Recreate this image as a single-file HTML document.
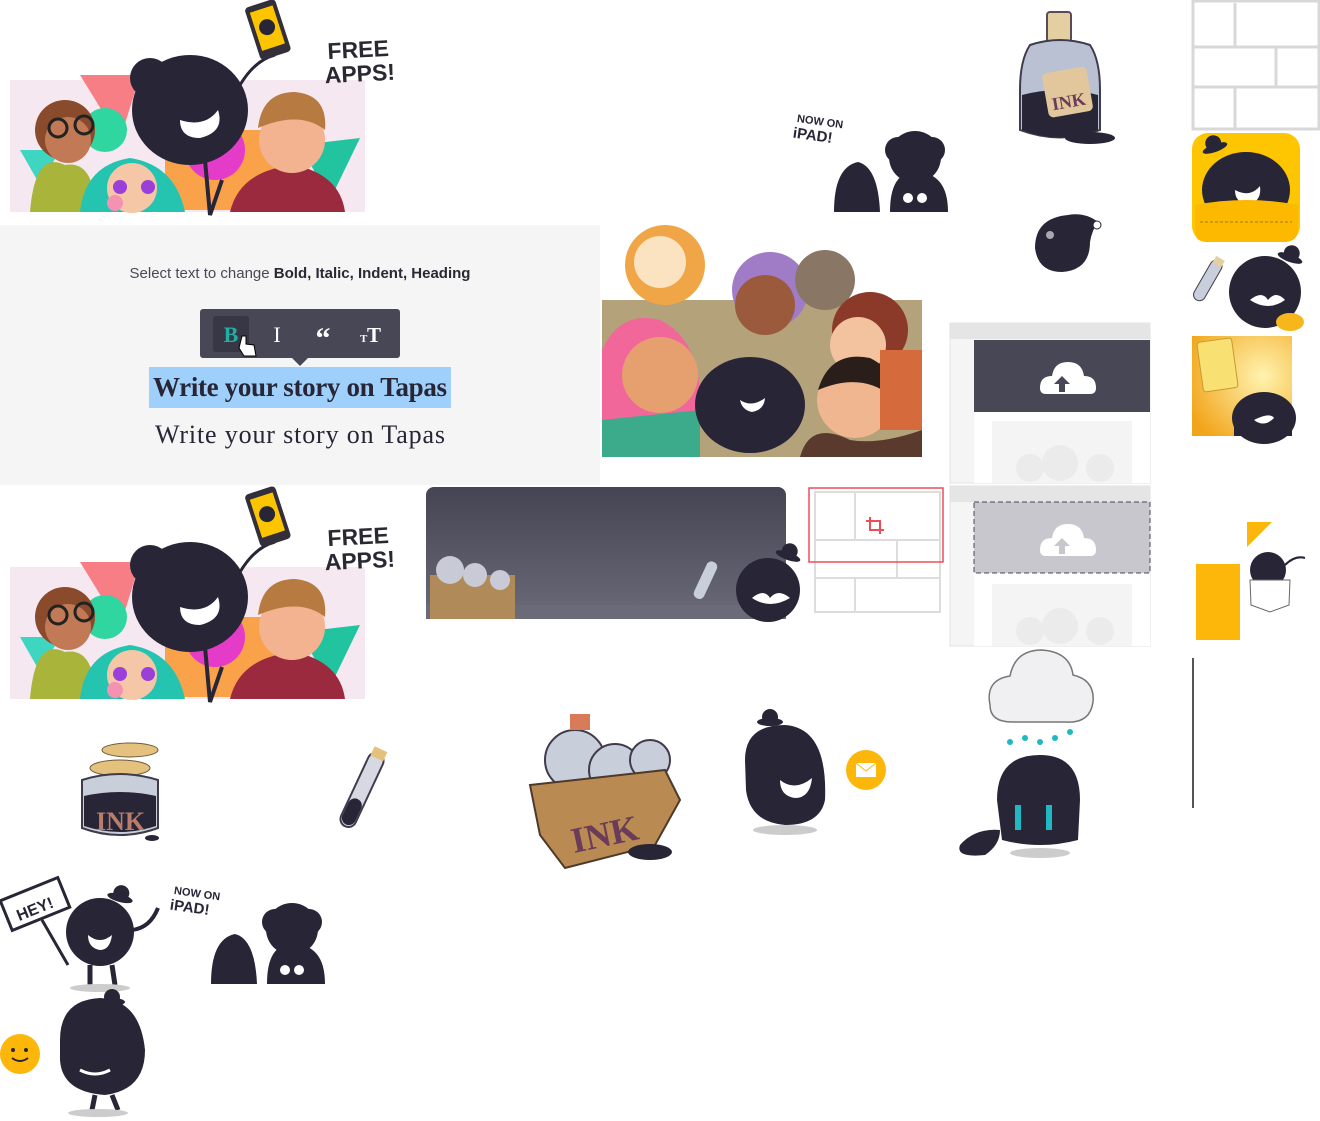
<!DOCTYPE html>
<html><head><meta charset="utf-8"><style>
html,body{margin:0;padding:0;background:#fff;width:1320px;height:1121px;overflow:hidden}
svg{display:block}
.t{font-family:"Liberation Sans",sans-serif}
.s{font-family:"Liberation Serif",serif}
</style></head><body>
<svg width="1320" height="1121" viewBox="0 0 1320 1121" xmlns="http://www.w3.org/2000/svg">
<defs>
<linearGradient id="bn" x1="0" y1="0" x2="0" y2="1"><stop offset="0" stop-color="#454452"/><stop offset="1" stop-color="#6b6a78"/></linearGradient>
<radialGradient id="ray" cx="0.7" cy="0.4" r="0.8"><stop offset="0" stop-color="#fff3b0"/><stop offset="1" stop-color="#f2a51a"/></radialGradient>
<g id="hat"><ellipse cx="0" cy="0" rx="13" ry="4" fill="#272536"/><circle cx="0" cy="-5" r="8" fill="#272536"/></g>
<g id="promo">
  <rect x="10" y="80" width="355" height="132" fill="#f6e8f0"/>
  <polygon points="80,75 140,75 120,140" fill="#f87e86"/>
  <polygon points="20,150 60,150 40,185" fill="#3ed6c0"/>
  <polygon points="300,145 360,138 330,200" fill="#22c4a0"/>
  <circle cx="105" cy="130" r="22" fill="#2fd69f"/>
  <rect x="165" y="130" width="110" height="80" fill="#f9a24a"/>
  <circle cx="215" cy="150" r="30" fill="#e43cc8"/>
  <path d="M30 212 Q35 150 65 165 Q95 160 95 212Z" fill="#a9b43a"/>
  <circle cx="65" cy="130" r="30" fill="#8a4b2c"/>
  <circle cx="68" cy="140" r="23" fill="#c17a55"/>
  <circle cx="58" cy="128" r="9" fill="none" stroke="#222" stroke-width="3"/><circle cx="84" cy="125" r="9" fill="none" stroke="#222" stroke-width="3"/>
  <path d="M80 212 Q85 165 130 158 Q175 165 185 212Z" fill="#25c4b0"/>
  <circle cx="132" cy="188" r="25" fill="#f6c7a7"/>
  <circle cx="120" cy="187" r="7" fill="#9b3fd9"/><circle cx="148" cy="187" r="7" fill="#9b3fd9"/>
  <circle cx="115" cy="203" r="8" fill="#f592b3"/>
  <path d="M230 212 Q240 170 295 165 Q340 175 345 212Z" fill="#9b2a3f"/>
  <circle cx="292" cy="140" r="33" fill="#f3b390"/>
  <path d="M258 128 Q262 92 295 92 Q328 95 325 130 Q300 110 258 128Z" fill="#b77b42"/>
  <ellipse cx="190" cy="110" rx="58" ry="55" fill="#272536"/>
  <circle cx="150" cy="78" r="20" fill="#272536"/>
  <path d="M180 120 Q205 128 218 110 Q225 132 200 138 Q180 138 180 120Z" fill="#fff"/>
  <path d="M205 160 L210 215 L222 180" fill="none" stroke="#272536" stroke-width="4"/>
  <path d="M240 85 Q255 60 275 55" fill="none" stroke="#272536" stroke-width="3"/>
  <g transform="rotate(-18 268 30)"><rect x="252" y="2" width="32" height="55" rx="4" fill="#332f3a"/><rect x="256" y="8" width="24" height="40" fill="#fdc500"/><circle cx="268" cy="27" r="8" fill="#272536"/></g>
  <text x="328" y="58" class="t" font-size="23" font-weight="bold" fill="#2a2833" transform="rotate(-3 350 60)">FREE</text>
  <text x="325" y="82" class="t" font-size="23" font-weight="bold" fill="#2a2833" transform="rotate(-3 350 80)">APPS!</text>
</g>
<g id="ipad">
  <text x="0" y="10" class="t" font-size="11" font-weight="bold" fill="#272536" transform="rotate(8)">NOW ON</text>
  <text x="-2" y="26" class="t" font-size="15" font-weight="bold" fill="#272536" transform="rotate(8)">iPAD!</text>
  <path d="M36 100 Q36 55 60 50 Q80 55 82 100Z" fill="#272536"/>
  <circle cx="117" cy="45" r="26" fill="#272536"/><circle cx="100" cy="38" r="13" fill="#272536"/><circle cx="134" cy="38" r="13" fill="#272536"/>
  <path d="M92 100 Q92 60 117 60 Q150 60 150 100Z" fill="#272536"/>
  <circle cx="110" cy="86" r="5" fill="#fff"/><circle cx="124" cy="86" r="5" fill="#fff"/>
</g>
<g id="upl">
  <rect x="0" y="0" width="200" height="160" fill="#f5f5f5" stroke="#e2e2e2"/>
  <rect x="0" y="0" width="200" height="16" fill="#e5e5e5"/>
  <rect x="24" y="84" width="176" height="76" fill="#fff"/>
  <rect x="42" y="98" width="140" height="62" fill="#f4f4f4"/>
  <circle cx="80" cy="145" r="14" fill="#ebebeb"/><circle cx="110" cy="140" r="18" fill="#ebebeb"/><circle cx="150" cy="145" r="14" fill="#ebebeb"/>
</g>
<path id="cloud" d="M0 32 Q0 20 12 20 Q14 6 28 6 Q42 6 44 20 Q56 20 56 32 Q56 38 50 38 L6 38 Q0 38 0 32Z" fill="#fff"/>
</defs>

<use href="#promo"/>
<use href="#promo" y="487"/>

<rect x="0" y="225" width="600" height="260" fill="#f5f5f5"/>
<text x="300" y="278" class="t" font-size="15" fill="#4a4855" text-anchor="middle">Select text to change <tspan font-weight="bold" fill="#2a2833">Bold, Italic, Indent, Heading</tspan></text>
<rect x="200" y="309" width="200" height="49" rx="3" fill="#484756"/>
<polygon points="292,358 308,358 300,366" fill="#484756"/>
<rect x="213" y="316" width="36" height="36" rx="3" fill="#383745"/>
<text x="231" y="342" class="s" font-size="22" font-weight="bold" fill="#21b0a3" text-anchor="middle">B</text>
<text x="277" y="342" class="s" font-size="22" fill="#fff" text-anchor="middle">I</text>
<text x="323" y="348" class="s" font-size="30" font-weight="bold" fill="#fff" text-anchor="middle">“</text>
<text x="360" y="342" class="s" font-size="11" font-weight="bold" fill="#fff">T</text><text x="367" y="342" class="s" font-size="21" font-weight="bold" fill="#fff">T</text>
<path d="M242 336 L246 336 L246 344 L254 345 L256 356 L244 356 L239 348 Z" fill="#fff" stroke="#000" stroke-width="1"/>
<rect x="149" y="367" width="302" height="41" fill="#9fd0fb"/>
<text x="300" y="396" class="s" font-size="27" font-weight="bold" fill="#272536" text-anchor="middle" textLength="294">Write your story on Tapas</text>
<text x="300" y="443" class="s" font-size="26" fill="#272536" text-anchor="middle" textLength="290">Write your story on Tapas</text>

<rect x="602" y="300" width="320" height="157" fill="#b3a27a"/>
<circle cx="665" cy="265" r="40" fill="#f0a646"/><circle cx="660" cy="262" r="26" fill="#fbe2c0"/>
<circle cx="770" cy="290" r="38" fill="#a07cc6"/><circle cx="765" cy="305" r="30" fill="#9c5a3c"/>
<circle cx="825" cy="280" r="30" fill="#8a7664"/>
<circle cx="870" cy="330" r="38" fill="#8b3a2a"/><circle cx="858" cy="345" r="28" fill="#f3c29f"/>
<path d="M602 350 Q620 310 660 320 Q700 340 700 400 L690 457 L602 457Z" fill="#f2679a"/>
<circle cx="660" cy="375" r="38" fill="#e6a070"/>
<path d="M602 420 L700 410 L700 457 L602 457Z" fill="#3cab8c"/>
<ellipse cx="750" cy="405" rx="55" ry="48" fill="#272536"/>
<path d="M740 400 Q752 408 765 398 Q764 410 752 412 Q742 410 740 400Z" fill="#fff"/>
<circle cx="855" cy="400" r="38" fill="#f0b68f"/><path d="M818 390 Q830 350 870 358 Q895 370 890 395 Q860 372 818 390Z" fill="#2a1e1a"/>
<path d="M800 457 Q810 420 850 440 Q880 445 922 430 L922 457Z" fill="#5a3a2c"/>
<rect x="880" y="350" width="42" height="80" fill="#d56a3c"/>

<rect x="1047" y="12" width="24" height="30" rx="3" fill="#e4cfa3" stroke="#5b4b55" stroke-width="2"/>
<path d="M1030 45 Q1060 35 1090 45 Q1100 60 1100 90 L1100 130 Q1060 145 1020 130 L1020 90 Q1020 60 1030 45Z" fill="#b9c1d3" stroke="#3f3b4c" stroke-width="2"/>
<path d="M1022 95 Q1060 85 1098 95 L1098 130 Q1060 145 1022 130Z" fill="#272536"/>
<rect x="1045" y="70" width="45" height="45" rx="5" fill="#e1c79b" transform="rotate(-10 1065 92)"/>
<text x="1050" y="108" class="s" font-size="18" font-weight="bold" fill="#6b3c59" transform="rotate(-10 1065 92)">INK</text>
<ellipse cx="1090" cy="138" rx="25" ry="6" fill="#272536"/>

<use href="#ipad" x="798" y="112"/>
<use href="#ipad" x="175" y="884"/>

<path d="M1098 222 Q1085 212 1068 215 Q1035 218 1035 248 Q1038 272 1062 272 Q1090 270 1090 242 Q1092 230 1098 222Z" fill="#272536"/>
<circle cx="1097" cy="225" r="4" fill="#fff" stroke="#272536"/>
<circle cx="1050" cy="235" r="4" fill="#fff" opacity="0.6"/>

<rect x="1193" y="1" width="126" height="128" fill="#fff" stroke="#d8d8d8" stroke-width="3"/>
<path d="M1235 3 V47 M1193 47 H1318 M1276 47 V87 M1193 87 H1318 M1235 87 V128" stroke="#d8d8d8" stroke-width="3"/>

<rect x="1192" y="133" width="108" height="109" rx="16" fill="#fdc600"/>
<ellipse cx="1246" cy="190" rx="44" ry="38" fill="#272536"/>
<use href="#hat" x="1215" y="148" transform="rotate(-20 1215 148)"/>
<path d="M1235 190 Q1250 198 1260 186 Q1262 202 1248 204 Q1235 203 1235 190Z" fill="#fff"/>
<path d="M1195 205 Q1246 195 1298 205 L1298 232 Q1296 242 1284 242 L1208 242 Q1195 242 1195 232Z" fill="#fdb800"/>
<path d="M1200 222 H1292" stroke="#a57a00" stroke-dasharray="3 2"/>

<ellipse cx="1265" cy="292" rx="36" ry="36" fill="#272536"/>
<use href="#hat" x="1290" y="258" transform="rotate(20 1290 258)"/>
<path d="M1250 300 Q1262 290 1268 300 Q1276 290 1285 300 Q1268 312 1250 300Z" fill="#fff"/>
<g transform="rotate(30 1208 280)"><rect x="1202" y="258" width="12" height="45" rx="6" fill="#c9cedb" stroke="#3f3b4c"/><rect x="1203" y="255" width="10" height="8" fill="#e4cfa3"/></g>
<ellipse cx="1290" cy="322" rx="14" ry="9" fill="#f7b71c"/>

<rect x="1192" y="336" width="100" height="100" fill="url(#ray)"/>
<rect x="1200" y="340" width="35" height="50" rx="3" fill="#f8e072" stroke="#c89a33" transform="rotate(-8 1217 365)"/>
<ellipse cx="1264" cy="418" rx="32" ry="26" fill="#272536"/>
<rect x="1234" y="420" width="58" height="16" fill="#272536"/>
<path d="M1254 420 Q1264 428 1274 418 Q1270 412 1254 420Z" fill="#fff"/>

<use href="#upl" x="950" y="323"/>
<rect x="974" y="340" width="176" height="72" fill="#484756"/>
<use href="#cloud" x="1040" y="356"/>
<path d="M1062 376 L1070 384 L1065 384 L1065 392 L1059 392 L1059 384 L1054 384Z" fill="#484756"/>
<use href="#upl" x="950" y="486"/>
<rect x="974" y="502" width="176" height="71" fill="#c8c7cd" stroke="#484756" stroke-dasharray="5 3"/>
<use href="#cloud" x="1040" y="518"/>
<path d="M1062 538 L1070 546 L1065 546 L1065 554 L1059 554 L1059 546 L1054 546Z" fill="#c8c7cd"/>

<rect x="815" y="492" width="125" height="120" fill="#fff" stroke="#ddd" stroke-width="2"/>
<path d="M855 492 V540 M815 540 H940 M897 540 V578 M815 578 H940 M855 578 V612" stroke="#ddd" stroke-width="2"/>
<rect x="809" y="488" width="134" height="74" fill="none" stroke="#ec4d5b" stroke-width="1.5"/>
<path d="M870 517 V530 H884 M866 521 H880 V534" fill="none" stroke="#ec4d5b" stroke-width="2"/>

<rect x="426" y="487" width="360" height="132" rx="8" fill="url(#bn)"/>
<rect x="426" y="605" width="360" height="14" fill="#6b6a78"/>
<rect x="430" y="575" width="85" height="44" fill="#b08a58"/>
<circle cx="450" cy="570" r="14" fill="#c8cbd6"/><circle cx="475" cy="575" r="12" fill="#c8cbd6"/><circle cx="500" cy="580" r="10" fill="#c8cbd6"/>
<circle cx="768" cy="590" r="32" fill="#272536"/>
<use href="#hat" x="788" y="556" transform="rotate(20 788 556)"/>
<path d="M752 598 Q764 588 770 598 Q778 588 790 598 Q770 610 752 598Z" fill="#fff"/>
<g transform="rotate(25 705 580)"><rect x="700" y="560" width="11" height="40" rx="5" fill="#c9cedb"/></g>

<polygon points="1247,522 1272,522 1247,547" fill="#fdb60a"/>
<rect x="1196" y="564" width="44" height="76" fill="#fdb60a"/>
<circle cx="1268" cy="570" r="18" fill="#272536"/>
<path d="M1250 580 L1290 580 L1289 605 L1270 612 L1251 605Z" fill="#fff" stroke="#666"/>
<path d="M1285 565 Q1295 555 1305 558" stroke="#272536" stroke-width="2" fill="none"/>
<rect x="1192" y="658" width="2" height="150" fill="#555"/>

<ellipse cx="130" cy="750" rx="28" ry="7" fill="#e4c27e" stroke="#6b5b40"/>
<ellipse cx="120" cy="768" rx="30" ry="8" fill="#e4c27e" stroke="#6b5b40"/>
<path d="M82 780 Q120 768 158 780 L158 828 Q120 842 82 828Z" fill="#c9cedb" stroke="#3f3b4c" stroke-width="2"/>
<path d="M84 796 Q120 788 156 796 L156 826 Q120 838 84 826Z" fill="#272536"/>
<text x="96" y="830" class="s" font-size="26" font-weight="bold" fill="#b87d6b">INK</text>
<ellipse cx="152" cy="838" rx="7" ry="3" fill="#272536"/>

<g transform="rotate(25 362 790)"><rect x="354" y="750" width="16" height="80" rx="8" fill="#d6d9e2" stroke="#3f3b4c" stroke-width="2"/><rect x="355" y="800" width="14" height="28" rx="7" fill="#272536"/><rect x="355" y="745" width="14" height="10" fill="#e4c27e"/></g>

<circle cx="575" cy="760" r="30" fill="#c9cedb" stroke="#3f3b4c" stroke-width="2"/>
<circle cx="615" cy="770" r="26" fill="#c9cedb" stroke="#3f3b4c" stroke-width="2"/>
<circle cx="650" cy="760" r="20" fill="#c9cedb" stroke="#3f3b4c" stroke-width="2"/>
<rect x="570" y="714" width="20" height="16" fill="#d77b58"/>
<polygon points="530,785 665,770 680,800 655,845 565,868 540,835" fill="#b98a52" stroke="#4d3a2b" stroke-width="2"/>
<text x="570" y="845" class="s" font-size="36" font-weight="bold" fill="#6b3c59" transform="rotate(-12 610 830)">INK</text>
<ellipse cx="650" cy="852" rx="22" ry="8" fill="#272536"/>

<use href="#hat" x="770" y="722"/>
<path d="M745 760 Q745 725 785 725 Q828 728 825 800 Q820 825 785 825 Q750 822 746 790Z" fill="#272536"/>
<path d="M780 780 Q795 792 812 778 Q810 798 795 798 Q780 796 780 780Z" fill="#fff"/>
<ellipse cx="785" cy="830" rx="32" ry="5" fill="#ccc"/>
<circle cx="866" cy="770" r="20" fill="#fdb60a"/>
<rect x="856" y="763" width="20" height="14" fill="#fff"/><path d="M856 763 L866 771 L876 763" stroke="#fdb60a" fill="none"/>

<path d="M990 705 Q985 680 1010 676 Q1015 650 1042 650 Q1070 652 1073 675 Q1095 680 1093 702 Q1090 724 1065 722 L1012 722 Q990 722 990 705Z" fill="#f0f0f2" stroke="#777" stroke-width="1.5"/>
<g fill="#1fb8c3"><circle cx="1010" cy="742" r="3"/><circle cx="1025" cy="738" r="3"/><circle cx="1040" cy="742" r="3"/><circle cx="1055" cy="738" r="3"/><circle cx="1070" cy="732" r="3"/></g>
<path d="M997 800 Q997 755 1040 755 Q1080 755 1080 800 L1078 840 Q1040 850 1002 840Z" fill="#272536"/>
<rect x="1015" y="805" width="6" height="25" fill="#1fb8c3"/><rect x="1046" y="805" width="6" height="25" fill="#1fb8c3"/>
<path d="M1000 830 Q975 828 960 845 Q955 858 985 855 Q1000 845 1000 830Z" fill="#272536"/>
<ellipse cx="1040" cy="853" rx="30" ry="5" fill="#ccc"/>

<rect x="4" y="888" width="62" height="32" fill="#fff" stroke="#272536" stroke-width="3" transform="rotate(-22 35 904)"/>
<text x="14" y="914" class="t" font-size="16" font-weight="bold" fill="#272536" transform="rotate(-22 35 904)">HEY!</text>
<path d="M42 920 L68 965" stroke="#272536" stroke-width="3"/>
<circle cx="100" cy="932" r="34" fill="#272536"/>
<use href="#hat" x="120" y="898" transform="rotate(15 120 898)"/>
<path d="M88 935 Q100 945 112 935 Q110 950 100 950 Q88 948 88 935Z" fill="#fff"/>
<path d="M90 965 L90 985 M112 965 L115 985" stroke="#272536" stroke-width="5"/>
<ellipse cx="100" cy="988" rx="30" ry="4" fill="#ccc"/>
<path d="M132 930 Q150 928 158 908" stroke="#272536" stroke-width="4" fill="none"/>

<circle cx="20" cy="1054" r="20" fill="#fdb60a"/>
<circle cx="13" cy="1050" r="2" fill="#272536"/><circle cx="26" cy="1050" r="2" fill="#272536"/>
<path d="M12 1058 Q20 1064 28 1058" stroke="#272536" stroke-width="2" fill="none"/>
<path d="M60 1040 Q60 1000 100 998 Q140 1000 145 1050 Q145 1090 105 1095 Q62 1092 60 1060Z" fill="#272536"/>
<use href="#hat" x="112" y="1002"/>
<path d="M80 1070 Q95 1078 110 1070" stroke="#fff" stroke-width="3" fill="none"/>
<path d="M95 1095 L92 1110 M112 1095 L118 1110" stroke="#272536" stroke-width="5"/>
<ellipse cx="98" cy="1113" rx="30" ry="4" fill="#ccc"/>
</svg>
</body></html>
